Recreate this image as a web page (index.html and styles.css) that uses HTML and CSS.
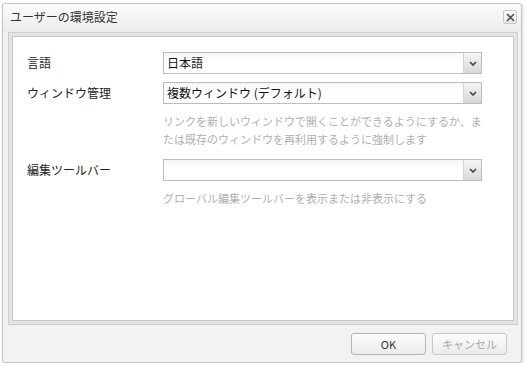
FILE: index.html
```html
<!DOCTYPE html>
<html lang="ja">
<head>
    <meta charset="UTF-8">
    <title>ユーザーの環境設定</title>
    <link rel="stylesheet" href="styles.css">
</head>
<body>
    <div class="dialog">
        <div class="titlebar">
            <span class="title">ユーザーの環境設定</span>
            <button class="close-button" title="閉じる">
                <svg width="9" height="9" viewBox="0 0 9 9"><path d="M1 1 L8 8 M8 1 L1 8" stroke="#555" stroke-width="1.6"/></svg>
            </button>
        </div>
        <div class="panel">
            <div class="panel-body">
                <div class="form-grid">
                    <label class="field-label">言語</label>
                    <div class="field">
                        <div class="combo">
                            <span class="combo-value">日本語</span>
                            <span class="combo-arrow"><svg width="8" height="5" viewBox="0 0 8 5"><path d="M1 1 L4 4 L7 1" stroke="#444" stroke-width="1.6" fill="none"/></svg></span>
                        </div>
                    </div>

                    <label class="field-label">ウィンドウ管理</label>
                    <div class="field">
                        <div class="combo">
                            <span class="combo-value">複数ウィンドウ (デフォルト)</span>
                            <span class="combo-arrow"><svg width="8" height="5" viewBox="0 0 8 5"><path d="M1 1 L4 4 L7 1" stroke="#444" stroke-width="1.6" fill="none"/></svg></span>
                        </div>
                        <p class="help">リンクを新しいウィンドウで開くことができるようにするか、または既存のウィンドウを再利用するように強制します</p>
                    </div>

                    <label class="field-label">編集ツールバー</label>
                    <div class="field">
                        <div class="combo">
                            <span class="combo-value"></span>
                            <span class="combo-arrow"><svg width="8" height="5" viewBox="0 0 8 5"><path d="M1 1 L4 4 L7 1" stroke="#444" stroke-width="1.6" fill="none"/></svg></span>
                        </div>
                        <p class="help">グローバル編集ツールバーを表示または非表示にする</p>
                    </div>
                </div>
            </div>
        </div>
        <div class="footer">
            <button class="btn">OK</button>
            <button class="btn btn-muted">キャンセル</button>
        </div>
    </div>
</body>
</html>
```

FILE: styles.css
```css
body {
    margin: 0;
    background-color: #fff;
    font-family: "Noto Sans CJK JP", "Noto Sans", sans-serif;
    color: #222;
}
.dialog {
    margin: 3px 0 0 2px;
    width: 518px;
    height: 358px;
    border: 1px solid #c4c4c4;
    border-radius: 3px;
    background-color: #f2f2f2;
    box-shadow: 1px 1px 3px rgba(0, 0, 0, 0.15);
    display: flex;
    flex-direction: column;
}
.titlebar {
    height: 28px;
    display: flex;
    align-items: center;
    justify-content: space-between;
    padding: 0 4px 0 7px;
    background: linear-gradient(#fbfbfb, #ececec);
    border-radius: 3px 3px 0 0;
}
.title {
    font-size: 12px;
    color: #333;
    margin-top: -3px;
}
.close-button {
    width: 14px;
    height: 14px;
    padding: 0;
    border: 1px solid #c8c8c8;
    border-radius: 2px;
    background: linear-gradient(#fdfdfd, #e6e6e6);
    display: flex;
    align-items: center;
    justify-content: center;
    margin-top: -2px;
}
.panel {
    margin: 0 3px 0 5px;
    border: 1px solid #cfcfcf;
    background-color: #e4e4e4;
    padding: 3px;
    height: 285px;
}
.panel-body {
    height: 100%;
    box-sizing: border-box;
    border: 1px solid #c6c6c6;
    background-color: #fff;
    padding: 15px 0 0 14px;
}
.form-grid {
    display: grid;
    grid-template-columns: 136px 319px;
    row-gap: 8px;
    align-items: start;
}
.field-label {
    font-size: 12px;
    line-height: 22px;
    color: #222;
}
.field {
    display: flex;
    flex-direction: column;
}
.combo {
    height: 22px;
    box-sizing: border-box;
    border: 1px solid #bcbcbc;
    background: linear-gradient(#f6f6f6, #fff 40%);
    display: flex;
    align-items: stretch;
}
.combo-value {
    flex: 1;
    font-size: 12px;
    line-height: 20px;
    padding-left: 3px;
    color: #111;
}
.combo-arrow {
    width: 17px;
    border-left: 1px solid #d4d4d4;
    background: linear-gradient(#f6f6f6, #d8d8d8);
    display: flex;
    align-items: center;
    justify-content: center;
}
.help {
    margin: 8px 0 3px 0;
    font-size: 11px;
    line-height: 18px;
    color: #b0b0b0;
}
.footer {
    flex: 1;
    display: flex;
    justify-content: flex-end;
    align-items: center;
    gap: 6px;
    padding: 0 14px 0 0;
}
.btn {
    width: 75px;
    height: 22px;
    border: 1px solid #b4b4b4;
    border-radius: 3px;
    background: linear-gradient(#fdfdfd, #ebebeb);
    font-family: "Noto Sans CJK JP", "Noto Sans", sans-serif;
    font-size: 11px;
    color: #333;
    padding: 0;
}
.btn-muted {
    color: #aaa;
    border-color: #c8c8c8;
}
```
